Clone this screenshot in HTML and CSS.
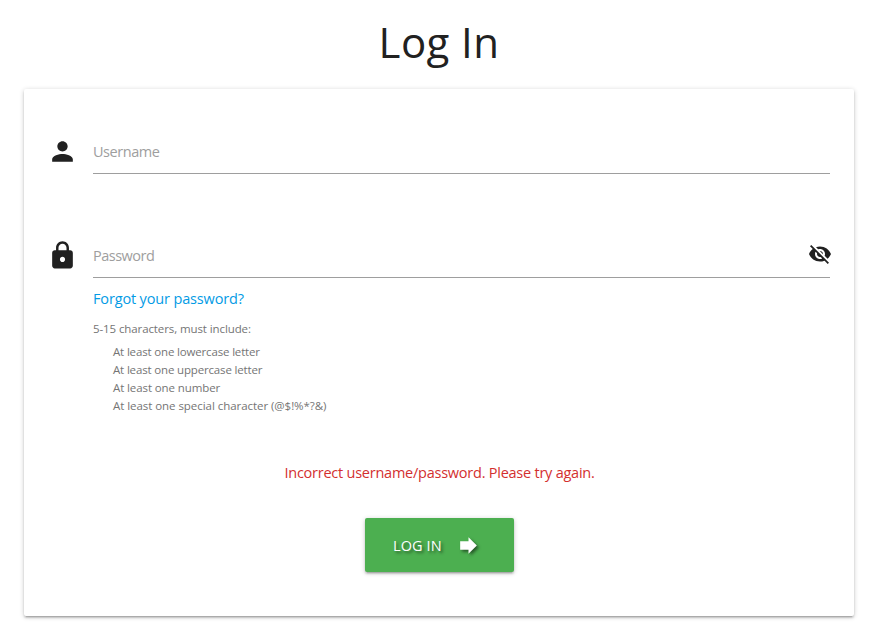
FILE: index.html
```html
<!DOCTYPE html>
<html lang="en">
<head>
<meta charset="utf-8">
<title>Log In</title>
<link rel="stylesheet" href="styles.css">
</head>
<body>
<main>
  <h1><span>Log In</span></h1>
  <form class="card">
    <div class="field">
      <svg class="icon" viewBox="0 0 24 24"><path d="M12 12c2.21 0 4-1.79 4-4s-1.79-4-4-4-4 1.79-4 4 1.79 4 4 4zm0 2c-2.67 0-8 1.34-8 4v2h16v-2c0-2.66-5.33-4-8-4z"/></svg>
      <div class="input"><span class="username">Username</span></div>
    </div>
    <div class="field password-field">
      <svg class="icon lock" viewBox="0 0 24 24"><path d="M18 8h-1V6c0-2.76-2.24-5-5-5S7 3.240 7 6v2H6c-1.100 0-2 .9-2 2v10c0 1.100.9 2 2 2h12c1.100 0 2-.9 2-2V10c0-1.100-.9-2-2-2zm-6 9c-1.100 0-2-.9-2-2s.9-2 2-2 2 .9 2 2-.9 2-2 2zm3.100-9H8.900V6c0-1.710 1.390-3.100 3.100-3.100s3.100 1.390 3.100 3.100v2z"/></svg>
      <div class="input"><span class="password">Password</span>
        <svg class="eye" viewBox="0 0 24 24"><path d="M12 7c2.760 0 5 2.240 5 5 0 .65-.13 1.260-.36 1.830l2.920 2.920c1.510-1.260 2.700-2.890 3.430-4.750-1.730-4.390-6-7.500-11-7.500-1.400 0-2.740.25-3.980.7l2.160 2.160C10.740 7.130 11.350 7 12 7zM2 4.270l2.280 2.280.46.46C3.080 8.300 1.780 10.020 1 12c1.730 4.390 6 7.500 11 7.500 1.550 0 3.030-.3 4.380-.84l.42.42L19.730 22 21 20.730 3.270 3 2 4.270zM7.530 9.800l1.550 1.550c-.05.21-.08.43-.08.65 0 1.660 1.340 3 3 3 .22 0 .44-.03.65-.08l1.550 1.550c-.67.33-1.410.53-2.200.53-2.760 0-5-2.240-5-5 0-.79.2-1.530.53-2.200zm4.310-.78l3.150 3.150.02-.16c0-1.660-1.340-3-3-3l-.17.01z"/></svg>
      </div>
    </div>
    <div class="help">
      <a class="forgot">Forgot your password?</a>
      <p class="rule">5-15 characters, must include:</p>
      <ul>
        <li class="lower">At least one lowercase letter</li>
        <li class="upper">At least one uppercase letter</li>
        <li class="number">At least one number</li>
        <li class="special">At least one special character (@$!%*?&amp;)</li>
      </ul>
    </div>
    <p class="error"><span>Incorrect username/password. Please try again.</span></p>
    <button type="button"><span>LOG IN</span>
      <svg class="arrow" viewBox="0 0 24 24"><path d="M12 8V4l8 8-8 8v-4H4V8z"/></svg>
    </button>
  </form>
</main>
</body>
</html>
```
FILE: styles.css
```css
* { box-sizing: border-box; }
body {
  margin: 0;
  background: #fff;
  color: #212121;
  font-family: "Open Sans", "Noto Sans", sans-serif;
  font-size: 14.5px;
}
main { padding: 0 24px; height: 632px; overflow: hidden; }
h1 {
  margin: 0;
  height: 89px;
  padding-top: 19px;
  font-size: 42px;
  font-weight: 400;
  line-height: 46px;
  letter-spacing: .4px;
  text-align: center;
}
.card {
  height: 527px;
  padding: 39px 24px 0 22px;
  border-radius: 2px;
  background: #fff;
  box-shadow: 0 2px 2px 0 rgba(0,0,0,.14), 0 3px 1px -2px rgba(0,0,0,.12), 0 1px 5px 0 rgba(0,0,0,.2);
}
.field { display: flex; height: 46px; }
.password-field { margin-top: 58px; }
.icon { width: 31px; height: 31px; margin: 7.500px 15px 0 1px; fill: #212121; flex: none; }
.input {
  flex: 1;
  display: flex;
  justify-content: space-between;
  border-bottom: 1px solid #9e9e9e;
  color: #9e9e9e;
  line-height: 48px;
  letter-spacing: -.45px;
}
.password { letter-spacing: -.5px; }
.eye { width: 24px; height: 24px; margin: 10px -2px 0 0; fill: #212121; }
.help { margin-left: 47px; padding-top: 11px; color: #757575; font-size: 11.5px; letter-spacing: -.1px; }
.forgot { display: block; color: #039be5; font-size: 14.5px; line-height: 20px; letter-spacing: -.15px; }
.rule { margin: 11px 0 0; line-height: 18px; }
ul { margin: 5px 0 0; padding: 0 0 0 20px; list-style: none; line-height: 18px; }
.lower, .upper { letter-spacing: -.16px; }
.special { letter-spacing: -.05px; }
.error { margin: 48px -3px 0 0; color: #d32f2f; line-height: 20px; letter-spacing: -.24px; text-align: center; }
button {
  display: flex;
  align-items: center;
  width: 149px;
  height: 54px;
  margin: 35px 0 0 319px;
  padding: 0 28px;
  border: 0;
  border-radius: 2px;
  background: #4caf50;
  color: #fff;
  font: 14.5px "Open Sans", "Noto Sans", sans-serif;
  letter-spacing: .1px;
  text-shadow: 2px 2px 3px rgba(0,0,0,.5);
  box-shadow: 0 2px 2px 0 rgba(0,0,0,.14), 0 3px 1px -2px rgba(0,0,0,.12), 0 1px 5px 0 rgba(0,0,0,.2);
}
button span { width: 63px; text-align: left; white-space: nowrap; }
.arrow { width: 25px; height: 25px; flex: none; fill: #fff; filter: drop-shadow(2px 2px 1.5px rgba(0,0,0,.5)); }
```
